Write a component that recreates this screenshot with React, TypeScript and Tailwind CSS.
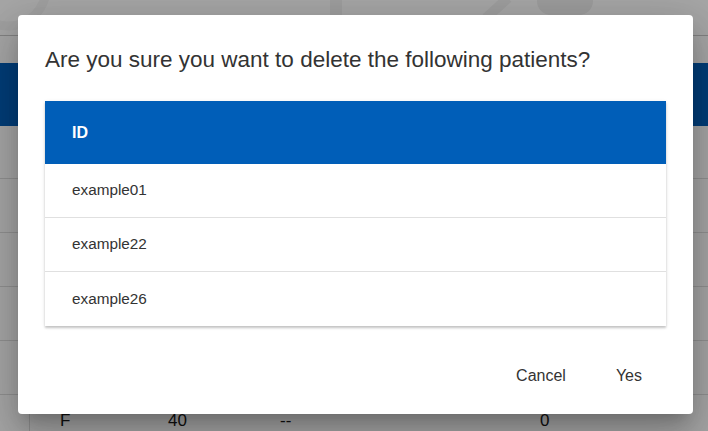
import React from 'react';

const patients = ['example01', 'example22', 'example26'];

function PagePattern() {
  return (
    <svg width="708" height="35" viewBox="0 0 708 35" className="absolute inset-0">
      <circle cx="8" cy="-12" r="38" fill="none" stroke="#f6f6f6" strokeWidth="9" />
      <rect x="330" y="-4" width="12" height="39" fill="#f3f3f3" />
      <line x1="508" y1="-2" x2="486" y2="18" stroke="#f3f3f3" strokeWidth="10" />
      <rect x="537" y="-20" width="56" height="35" rx="14" fill="#f0f0f0" />
    </svg>
  );
}

export default function App() {
  return (
    <div className="relative w-[708px] h-[431px] overflow-hidden bg-white font-['Liberation_Sans',Arial,sans-serif]">
      {/* page behind the dialog */}
      <div className="flex flex-col h-full">
        <div className="relative h-[35px] shrink-0">
          <PagePattern />
        </div>
        <div className="h-[28px] shrink-0 border-t border-[#c8c8c8]" />
        <div className="h-[63px] shrink-0 bg-[#005eb8]" />
        <div className="h-[53px] shrink-0 border-b border-[#dedede]" />
        <div className="h-[54px] shrink-0 border-b border-[#dedede]" />
        <div className="h-[54px] shrink-0 border-b border-[#dedede]" />
        <div className="h-[54px] shrink-0 border-b border-[#dedede]" />
        <div className="h-[54px] shrink-0 border-b border-[#dedede]" />
        <div className="flex-1 ml-[29px] border-l border-[#dedede] flex items-start pt-[16px] text-[17px] leading-[20px] text-[#1a1a1a]">
          <span className="ml-[30px] w-[108px]">F</span>
          <span className="w-[112px]">40</span>
          <span className="w-[260px]">--</span>
          <span>0</span>
        </div>
      </div>

      {/* backdrop */}
      <div className="absolute inset-0 bg-black/35" />

      {/* dialog */}
      <div className="absolute left-[18px] top-[15px] w-[675px] h-[399px] rounded bg-white shadow-[0_11px_15px_-7px_rgba(0,0,0,0.2),0_24px_38px_3px_rgba(0,0,0,0.14),0_9px_46px_8px_rgba(0,0,0,0.12)] flex flex-col">
        <h2 className="pt-[32px] px-[27px] text-[22.5px] leading-[26px] text-[#333333] whitespace-nowrap">
          Are you sure you want to delete the following patients?
        </h2>
        <div className="mt-[28px] mx-[27px] bg-white shadow-[0_2px_2px_0_rgba(0,0,0,0.18),0_1px_4px_0_rgba(0,0,0,0.1)]">
          <div className="h-[63px] bg-[#005eb8] flex items-center px-[27px] text-[16px] font-bold text-white">
            ID
          </div>
          {patients.map((id, i) => (
            <div
              key={id}
              className={`h-[54px] flex items-center px-[27px] text-[15.3px] text-[#333333] ${i < patients.length - 1 ? 'border-b border-[#e0e0e0]' : ''}`}
            >
              {id}
            </div>
          ))}
        </div>
        <div className="flex-1 flex items-end justify-end pb-[20px] pr-[35px]">
          <button className="h-[36px] px-[16px] text-[16px] text-[#333333]">Cancel</button>
          <button className="h-[36px] px-[16px] text-[16px] text-[#333333] ml-[18px]">Yes</button>
        </div>
      </div>
    </div>
  );
}
